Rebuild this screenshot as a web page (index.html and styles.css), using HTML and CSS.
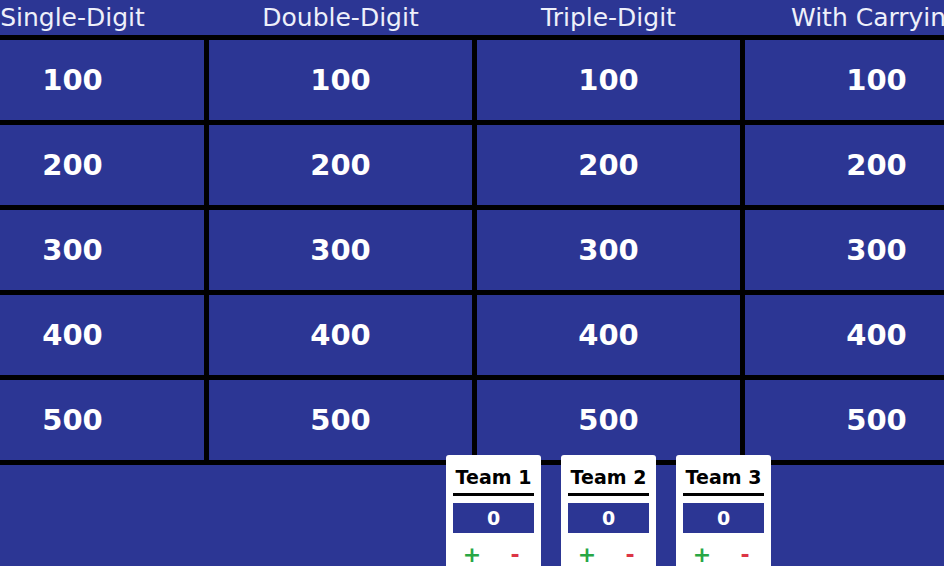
FILE: index.html
```html
<!DOCTYPE html>
<html lang="en">
<head>
  <meta charset="UTF-8">
  <meta name="viewport" content="width=device-width, initial-scale=1.0">
  <title>Math Jeopardy</title>
  <link rel="stylesheet" href="styles.css">
</head>
<body>
  <div class="board">
    <div class="categories">
      <div class="category">Single-Digit</div>
      <div class="category">Double-Digit</div>
      <div class="category">Triple-Digit</div>
      <div class="category">With Carrying</div>
    </div>

    <div class="grid" id="grid"></div>
  </div>

  <div class="teams">
    <div class="team">
      <h3 class="team-name">Team 1</h3>
      <div class="score">0</div>
      <div class="controls"><button class="plus">+</button><button class="minus">-</button></div>
    </div>
    <div class="team">
      <h3 class="team-name">Team 2</h3>
      <div class="score">0</div>
      <div class="controls"><button class="plus">+</button><button class="minus">-</button></div>
    </div>
    <div class="team">
      <h3 class="team-name">Team 3</h3>
      <div class="score">0</div>
      <div class="controls"><button class="plus">+</button><button class="minus">-</button></div>
    </div>
  </div>

  <script>
    const grid = document.getElementById('grid');
    const valores = [100, 200, 300, 400, 500];

    // uma linha por valor, uma celula por categoria
    valores.forEach(v => {
      for (let c = 0; c < 4; c++) {
        grid.innerHTML += `<div class="cell">${v}</div>`;
      }
    });
  </script>
</body>
</html>
```

FILE: styles.css
```css
html, body { margin: 0; overflow: hidden; }
body { background: #2c3694; font-family: "DejaVu Sans", Verdana, sans-serif; }

.board { width: 1077px; margin-left: -64px; }
.categories { display: grid; grid-template-columns: repeat(4, 263px); column-gap: 5px; padding: 0 5px; height: 35px; }
.category { color: #eef0fa; font-size: 25px; line-height: 35px; text-align: center; white-space: nowrap; }

.grid { display: grid; grid-template-columns: repeat(4, 263px); grid-auto-rows: 80px; gap: 5px; padding: 5px; background: #000; }
.cell { background: #2c3694; color: #fff; font-size: 29px; font-weight: bold; display: flex; align-items: center; justify-content: center; }

.teams { display: flex; gap: 20px; padding-left: 446px; margin-top: -10px; }
.team { width: 81px; padding: 11px 7px 20px; background: #fff; border-radius: 3px; }
.team-name { margin: 0; padding-bottom: 5px; border-bottom: 3px solid #000; font-size: 19px; text-align: center; white-space: nowrap; }
.score { margin-top: 7px; height: 30px; background: #2c3694; color: #fff; font-weight: bold; font-size: 19px; line-height: 30px; text-align: center; }
.controls { display: flex; justify-content: center; gap: 15px; margin-top: 7px; }
.controls button { width: 28px; padding: 0; border: none; background: none; font-family: inherit; font-size: 22px; font-weight: bold; line-height: 30px; }
.plus { color: #28a745; }
.minus { color: #dc3545; }
```
